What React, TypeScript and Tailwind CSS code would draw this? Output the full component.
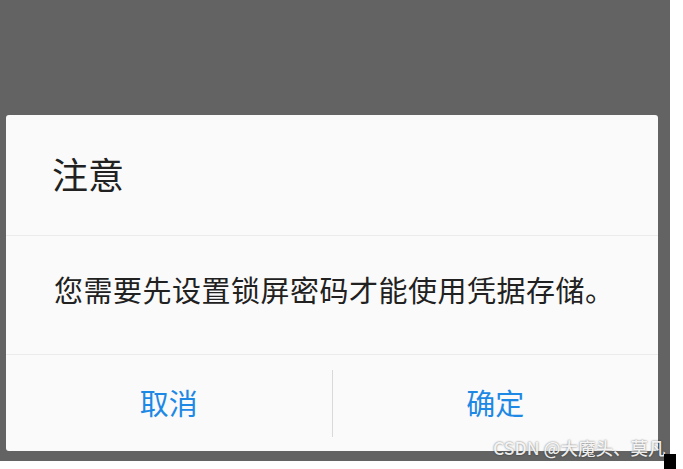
import React from "react";

const cjk = { fontFamily: '"Noto Sans CJK SC", "Noto Sans", sans-serif' };

const App = () => {
  return (
    <div className="relative w-[683px] h-[469px] bg-white overflow-hidden" style={cjk}>
      <div className="w-[670px] h-[461px] bg-[#636363] pt-[115px] pl-[6px]">
        <div className="w-[652px] h-[336px] bg-[#fafafa] rounded-[3px] flex flex-col">
          <div className="h-[121px] flex items-center pl-[46px] pb-[4px] border-b border-[#ebebeb]">
            <span className="text-[36px] leading-none text-[#212121]">注意</span>
          </div>
          <div className="h-[119px] flex items-center pl-[48px] pb-[12px] border-b border-[#ebebeb]">
            <span className="text-[29px] leading-none text-[#212121] tracking-[0.5px]">
              您需要先设置锁屏密码才能使用凭据存储。
            </span>
          </div>
          <div className="flex-1 flex items-center">
            <button className="flex-1 h-full flex items-center justify-center text-[29px] text-[#1e88e5]">
              取消
            </button>
            <div className="w-px h-[67px] bg-[#d9d9d9]" />
            <button className="flex-1 h-full flex items-center justify-center text-[29px] text-[#1e88e5]">
              确定
            </button>
          </div>
        </div>
      </div>
      <span className="absolute left-[493px] top-[438px] text-[17.5px] leading-[20px] font-medium text-white/90 [text-shadow:0_0_2px_rgba(0,0,0,0.6)] whitespace-nowrap">
        CSDN @大魔头、莫凡
      </span>
      <div className="absolute left-[664px] top-[454px] w-[12px] h-[15px] bg-black" />
    </div>
  );
};

export default App;
